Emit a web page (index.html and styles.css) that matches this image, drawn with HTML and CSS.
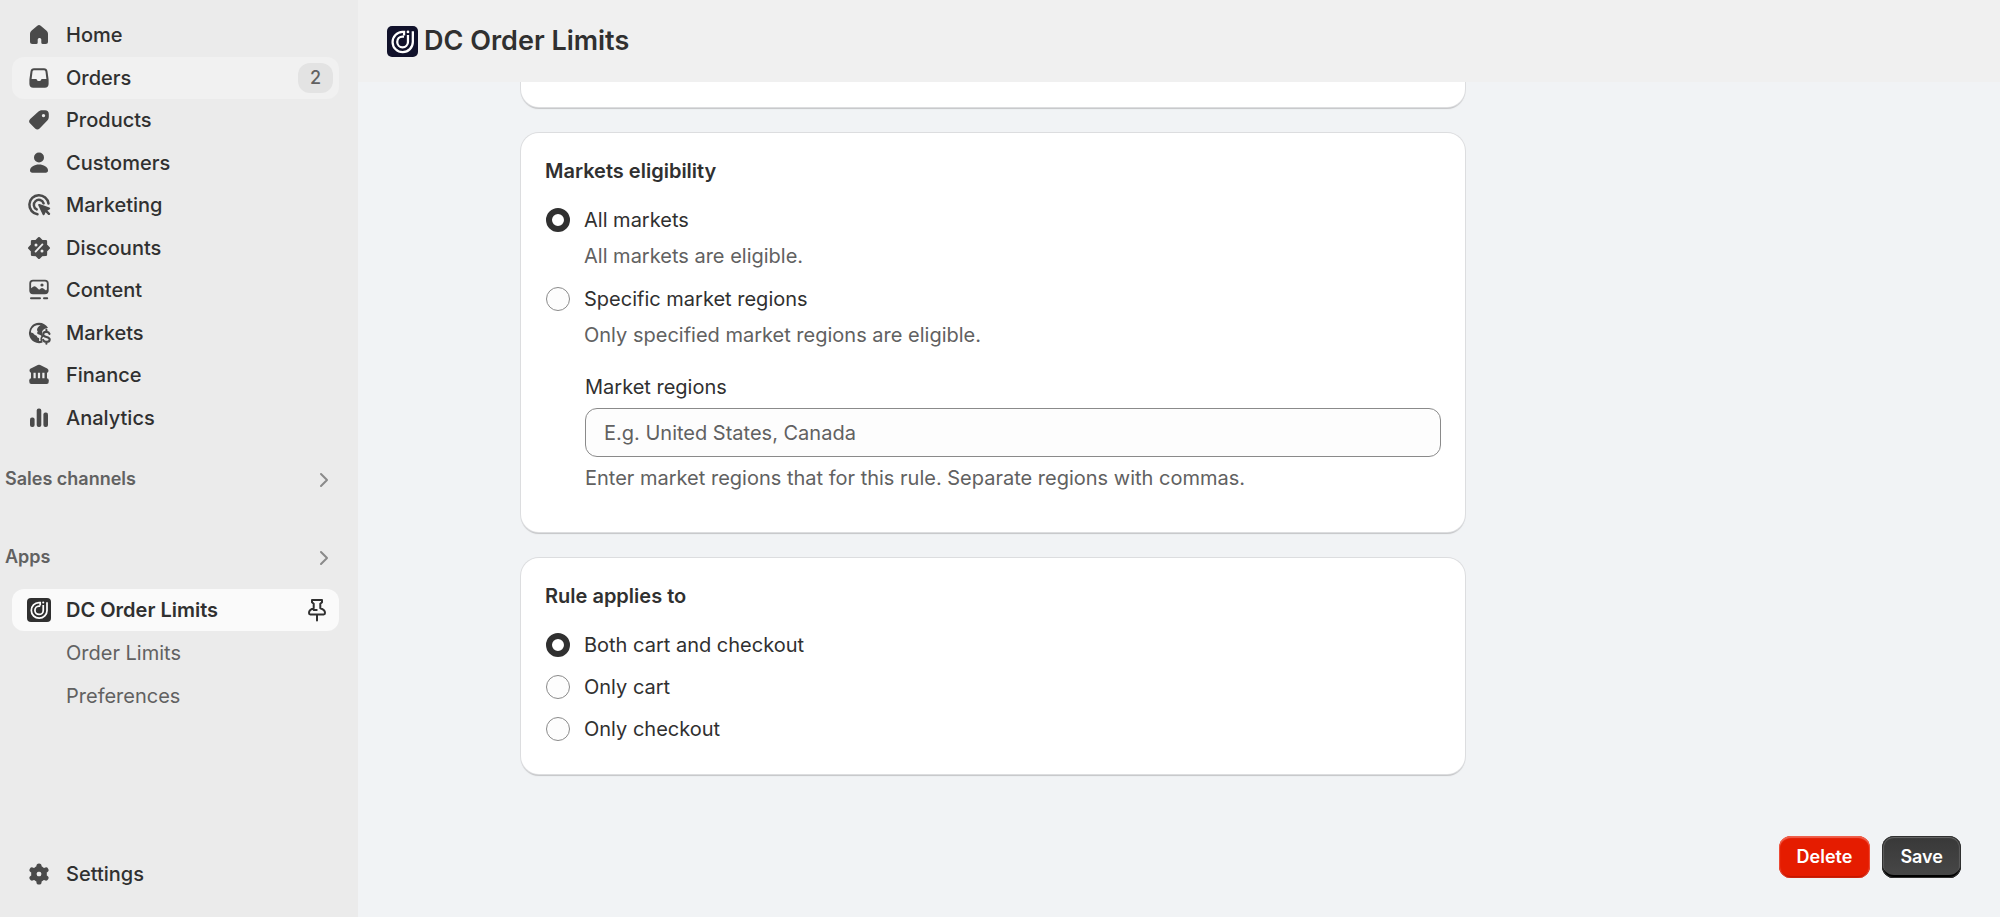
FILE: index.html
```html
<!DOCTYPE html>
<html lang="en">
<head>
  <meta charset="UTF-8">
  <meta name="viewport" content="width=device-width,initial-scale=1">
  <title>DC Order Limits</title>
  <link rel="stylesheet" href="styles.css">
</head>
<body>
  <svg class="sprite" aria-hidden="true">
    <symbol id="logo" viewBox="0 0 30 30">
      <path d="M16.500 9.300V5.700H15A9.800 9.800 0 1 0 25 15.500V5.200" fill="none" stroke="#fff" stroke-width="2.200"/>
      <path d="M16.500 10.200H15A5.200 5.200 0 1 0 20.300 15.500V8.600" fill="none" stroke="#fff" stroke-width="2.200"/>
      <circle cx="20.300" cy="5.700" r="1.300" fill="#fff"/>
    </symbol>
  </svg>

  <nav class="sidebar">
    <ul class="menu">
      <li><a class="item" href="#">
        <svg class="icon" viewBox="0 0 24 24"><path d="M10.300 2.700a2.600 2.600 0 0 1 3.400 0l5.600 4.900c1 .9 1.700 2.200 1.700 3.500v7.400a2.500 2.500 0 0 1-2.500 2.500h-2.700a1.500 1.500 0 0 1-1.500-1.500v-3a1.500 1.500 0 0 0-1.500-1.500h-.6a1.500 1.500 0 0 0-1.500 1.500v3a1.500 1.500 0 0 1-1.500 1.500H5.500A2.500 2.500 0 0 1 3 18.500v-7.400c0-1.300.7-2.600 1.700-3.500z"/></svg>
        Home</a></li>
      <li><a class="item hover" href="#">
        <svg class="icon" viewBox="0 0 24 24"><path fill-rule="evenodd" d="M7 2.300h10c2 0 3.200 1.200 3.500 3.200l1.100 8v4.500a3.800 3.800 0 0 1-3.800 3.700H6.200A3.800 3.800 0 0 1 2.400 18v-4.500l1.100-8c.3-2 1.500-3.200 3.500-3.200zM7.200 4.300c-1 0-1.500.5-1.700 1.500l-.9 7.200h4c.8 0 1.200.4 1.400 1 .4.800.8 1 1.400 1h1.200c.6 0 1-.2 1.400-1 .2-.6.6-1 1.400-1h4l-.9-7.200c-.2-1-.7-1.500-1.700-1.500z"/></svg>
        Orders<span class="badge">2</span></a></li>
      <li><a class="item" href="#">
        <svg class="icon" viewBox="0 0 24 24"><path fill-rule="evenodd" d="M11.500 3.500c1.200-.9 2.300-1.200 3.700-1.200h2.800a3.800 3.800 0 0 1 3.800 3.800v2.700c0 1.500-.4 2.700-1.500 3.800l-7.700 7.900a3.200 3.200 0 0 1-4.500 0l-4.900-4.900a3.200 3.200 0 0 1 0-4.500zM16.500 5.900a1.700 1.700 0 1 0 0 3.400 1.700 1.700 0 0 0 0-3.400z"/></svg>
        Products</a></li>
      <li><a class="item" href="#">
        <svg class="icon" viewBox="0 0 24 24"><circle cx="12" cy="6.500" r="5"/><path d="M3 19.500c0-3.500 4.500-6 9-6s9 2.500 9 6c0 1.300-.9 2.200-2.200 2.200H5.200C3.900 21.700 3 20.800 3 19.500z"/></svg>
        Customers</a></li>
      <li><a class="item" href="#">
        <svg class="icon" viewBox="0 0 24 24"><g fill="none" stroke="#4a4a4a" stroke-width="2.500" stroke-linecap="round"><path d="M10.500 21.300A9.600 9.600 0 1 1 21.500 10.500"/><path d="M9.700 16.400A5 5 0 1 1 16.600 10.300"/></g><path d="M11.200 12.300c-.3-1 .5-1.700 1.400-1.300l9.800 3.600c1.100.4 1.100 1.600 0 2l-2 .9 2.600 2.700c.8.800-.8 2.500-1.700 1.700l-2.700-2.700-1 2.300c-.4 1.100-1.600 1-2-.1z"/></svg>
        Marketing</a></li>
      <li><a class="item" href="#">
        <svg class="icon" viewBox="0 0 24 24"><path d="M12 2.200 14.900 5 18.900 5.100 19 9.100 21.800 12 19 14.900 18.900 18.900 14.900 19 12 21.800 9.100 19 5.100 18.900 5 14.900 2.200 12 5 9.100 5.100 5.100 9.100 5z" stroke="#4a4a4a" stroke-width="2.400" stroke-linejoin="round"/><path d="M8.600 15.600l6.800-7.200" stroke="#ebebeb" stroke-width="1.900" stroke-linecap="round"/><circle cx="9" cy="9" r="1.500" fill="#ebebeb"/><circle cx="15" cy="15" r="1.500" fill="#ebebeb"/></svg>
        Discounts</a></li>
      <li><a class="item" href="#">
        <svg class="icon" viewBox="0 0 24 24"><path fill-rule="evenodd" d="M6 1.700h12a3.700 3.700 0 0 1 3.700 3.700v7.200a3.700 3.700 0 0 1-3.700 3.700H6a3.700 3.700 0 0 1-3.700-3.700V5.400A3.700 3.700 0 0 1 6 1.700zM6 3.500a1.900 1.900 0 0 0-1.900 1.900v4.900l1.700-1.400c1.200-1 2.200-1 3.300 0l3 2.900 1.300-1.100c1.200-1 2.200-.9 3.300 0l1.600 1.400c.9.600 1.600-.1 1.600-1V5.400A1.900 1.900 0 0 0 18 3.500z"/><circle cx="15" cy="7" r="1.600"/><path d="M4 20.300h9M17 20.300h3.200" stroke="#4a4a4a" stroke-width="2" stroke-linecap="round"/></svg>
        Content</a></li>
      <li><a class="item" href="#">
        <svg class="icon" viewBox="0 0 24 24"><path fill-rule="evenodd" d="M12 1.800c4 0 7.200 2 9 5l-1.200.4c-2.800.4-4.800 2-4.800 4.600 0 1.800.8 2.800 2 3.600-1.600.7-2.300 2-2 3.600l.6 2.600A10.200 10.200 0 1 1 12 1.800zM9.800 4.200C6 5.200 3.900 8.500 4 11.400c1.300 0 2.500.7 3 1.900.6 1.200 2.300.6 2.900 1.900.4 1.200.9 1.500 1.900 1.800.7.400.2 1.800.3 3.100l1.600-.1c-.6-2-.3-3.800.8-5.100-1-.9-1.800-1.100-3.500-1.600-1-.4-1.200-2-.2-2.800C9.200 9.200 10 6.300 13.500 4z"/><path d="M22.500 12.900c-.5-1.500-2-2.100-3.300-2-1.800 0-3 1.100-3 2.500 0 3.300 6.500 1.700 6.500 5 0 1.500-1.400 2.500-3.200 2.500-1.600 0-3-.8-3.400-2.200M19.400 8.900v2M19.400 20.700v2" fill="none" stroke="#4a4a4a" stroke-width="2.100" stroke-linecap="round"/></svg>
        Markets</a></li>
      <li><a class="item" href="#">
        <svg class="icon" viewBox="0 0 24 24"><path d="M10.800 2.100a2.800 2.800 0 0 1 2.400 0l7 3.400a2.400 2.400 0 0 1 1.300 2.200c0 1.200-.9 2.100-2.100 2.100H4.600a2.100 2.100 0 0 1-2.100-2.100c0-1 .5-1.800 1.300-2.200z"/><path d="M4 9h2.500v7H4zM8.700 9h2.200v7H8.700zM13.100 9h2.200v7h-2.200zM17.500 9H20v7h-2.500z"/><rect x="2.300" y="15.300" width="19.400" height="5.700" rx="2"/></svg>
        Finance</a></li>
      <li><a class="item" href="#">
        <svg class="icon" viewBox="0 0 24 24"><rect x="3" y="11.500" width="4.600" height="9.500" rx="2"/><rect x="9.700" y="2.500" width="4.600" height="18.500" rx="2"/><rect x="16.400" y="6.500" width="4.600" height="14.500" rx="2"/></svg>
        Analytics</a></li>
    </ul>

    <button class="section" type="button">Sales channels
      <svg class="chevron" viewBox="0 0 10 16"><path d="M2 2l6 6-6 6"/></svg></button>
    <button class="section" type="button">Apps
      <svg class="chevron" viewBox="0 0 10 16"><path d="M2 2l6 6-6 6"/></svg></button>

    <ul class="menu apps">
      <li><a class="item active" href="#">
        <svg class="icon app-icon"><use href="#logo"/></svg>
        DC Order Limits
        <svg class="pin" viewBox="0 0 24 24"><path d="M7 2h10v2.300l-1.700 1.500v4.500c2.900.8 4.700 2.200 4.700 4.700 0 .9-.5 1.400-1.300 1.400H5.300c-.8 0-1.300-.5-1.300-1.400 0-2.500 1.800-3.900 4.700-4.700V5.800L7 4.300zM12 16.500v6M8.700 12h3"/></svg></a></li>
      <li><a class="item sub" href="#">Order Limits</a></li>
      <li><a class="item sub" href="#">Preferences</a></li>
    </ul>

    <a class="item settings" href="#">
      <svg class="icon" viewBox="0 0 24 24"><circle cx="12" cy="12" r="5.200" fill="none" stroke="#4a4a4a" stroke-width="5.400"/><path d="M12 4v3M12 17v3M5.100 8l2.600 1.500M16.300 14.500l2.600 1.500M18.900 8l-2.600 1.500M7.700 14.500l-2.600 1.500" stroke="#4a4a4a" stroke-width="5.200" stroke-linecap="round"/></svg>
      Settings</a>
  </nav>

  <div class="page">
    <header class="topbar">
      <svg class="logo"><use href="#logo"/></svg>
      <h1>DC Order Limits</h1>
    </header>

    <main class="layout">
      <form class="column">
        <div class="card card-tail"></div>

        <section class="card">
          <h2>Markets eligibility</h2>
          <div class="choices">
            <label class="choice"><input type="radio" name="markets" checked> All markets</label>
            <p class="hint">All markets are eligible.</p>
            <label class="choice"><input type="radio" name="markets"> Specific market regions</label>
            <p class="hint">Only specified market regions are eligible.</p>
          </div>
          <div class="field">
            <label for="regions">Market regions</label>
            <input type="text" id="regions" placeholder="E.g. United States, Canada">
            <p>Enter market regions that for this rule. Separate regions with commas.</p>
          </div>
        </section>

        <section class="card">
          <h2>Rule applies to</h2>
          <div class="choices">
            <label class="choice"><input type="radio" name="applies" checked> Both cart and checkout</label>
            <label class="choice"><input type="radio" name="applies"> Only cart</label>
            <label class="choice"><input type="radio" name="applies"> Only checkout</label>
          </div>
        </section>
      </form>
    </main>

    <footer class="actions">
      <button class="btn delete" type="button">Delete</button>
      <button class="btn save" type="button">Save</button>
    </footer>
  </div>
</body>
</html>
```
FILE: styles.css
```css
* { box-sizing:border-box; }
body { margin:0; min-height:100vh; display:flex; background:#f1f3f5; color:#303030; font:20px/28px Inter, sans-serif; }
h1, h2, p, ul { margin:0; padding:0; }
ul { list-style:none; }
button, input { font:inherit; color:inherit; }
.sprite { display:none; }

/* sidebar */
.sidebar { width:358px; flex:none; padding:14px 19px 22px 0; display:flex; flex-direction:column; background:#ebebeb; }
.menu { min-height:425px; margin-left:12px; display:grid; grid-auto-rows:1fr; align-items:center; }
.menu.apps { min-height:128px; margin-top:18px; }
.item { height:42px; padding:0 6px 0 15px; display:flex; align-items:center; border-radius:12px; color:#303030; font-weight:500; text-decoration:none; }
.item.hover { background:#f1f1f1; }
.item.active { background:#fafafa; font-weight:600; }
.item.sub { padding-left:54px; color:#616161; font-weight:400; }
.icon { width:24px; height:24px; margin-right:15px; fill:#4a4a4a; }
.app-icon { background:#303030; border-radius:4px; }
.badge { margin-left:auto; padding:0 12px; border-radius:12px; background:#e3e3e3; color:#616161; font-size:18px; line-height:30px; }
.pin { width:24px; height:24px; margin-left:auto; margin-right:4px; fill:none; stroke:#303030; stroke-width:2; stroke-linejoin:round; stroke-linecap:round; }
.section { height:28px; margin-top:26px; padding:0 10px 0 5px; border:0; background:none; display:flex; align-items:center; justify-content:space-between; color:#616161; font-size:18px; font-weight:600; }
.section + .section { margin-top:50px; }
.chevron { width:10px; height:16px; margin-top:2px; fill:none; stroke:#8a8a8a; stroke-width:2; stroke-linecap:round; stroke-linejoin:round; }
.settings { margin-top:auto; margin-left:12px; }

/* page */
.page { flex:1; min-width:0; display:flex; flex-direction:column; }
.topbar { height:82px; padding:0 29px; display:flex; align-items:center; gap:6px; background:#f0f0f0; }
.topbar h1 { font-size:27px; line-height:36px; font-weight:600; }
.logo { width:31px; height:31px; background:#11122b; border-radius:5px; }
.layout { padding:0 163px; display:grid; grid-template-columns:minmax(0,1fr) 348px; gap:24px; }
.column { display:flex; flex-direction:column; gap:26px; }
.card { padding:24px; background:#fff; border-radius:18px; box-shadow:0 0 0 1px #dcdddf, 0 2px 1px #c4c5c7; }
.card-tail { height:25px; padding:0; border-radius:0 0 18px 18px; clip-path:inset(0 -4px -4px); }
.card h2 { font-size:20px; line-height:28px; font-weight:600; }
.choices { margin-top:14px; padding-left:1px; }
.choice { height:42px; display:flex; align-items:center; gap:14px; }
.choice input { appearance:none; width:24px; height:24px; margin:0; border:1px solid #8a8a8a; border-radius:50%; background:#fdfdfd; }
.choice input:checked { border:6px solid #303030; background:#fff; }
.hint { padding:1px 0 8px 38px; color:#616161; }
.field { padding:16px 0 16px 40px; display:flex; flex-direction:column; }
.field input { height:49px; margin:7px 0; padding:0 18px; border:1px solid #8a8a8a; border-radius:12px; background:#fdfdfd; }
.field input::placeholder { color:#616161; opacity:1; }
.field p { color:#616161; }

/* footer buttons */
.actions { margin-top:auto; padding:0 39px 39px; display:flex; justify-content:flex-end; gap:12px; }
.btn { height:42px; padding:0 18px; border:0; border-radius:12px; color:#fff; font-size:18px; font-weight:600; }
.delete { background:#e51c00; box-shadow:inset 0 2px 1px #f0604c, inset 1px 0 1px #ee4f3a, inset -1px 0 1px #ee4f3a, inset 0 -2px #c41700; }
.save { background:linear-gradient(#383838, #484848); box-shadow:inset 0 0 0 1px #303030, inset 0 -3px #000, inset 0 2px 1px #686868, inset 2px 0 1px #5c5c5c, inset -2px 0 1px #5c5c5c; }
```
